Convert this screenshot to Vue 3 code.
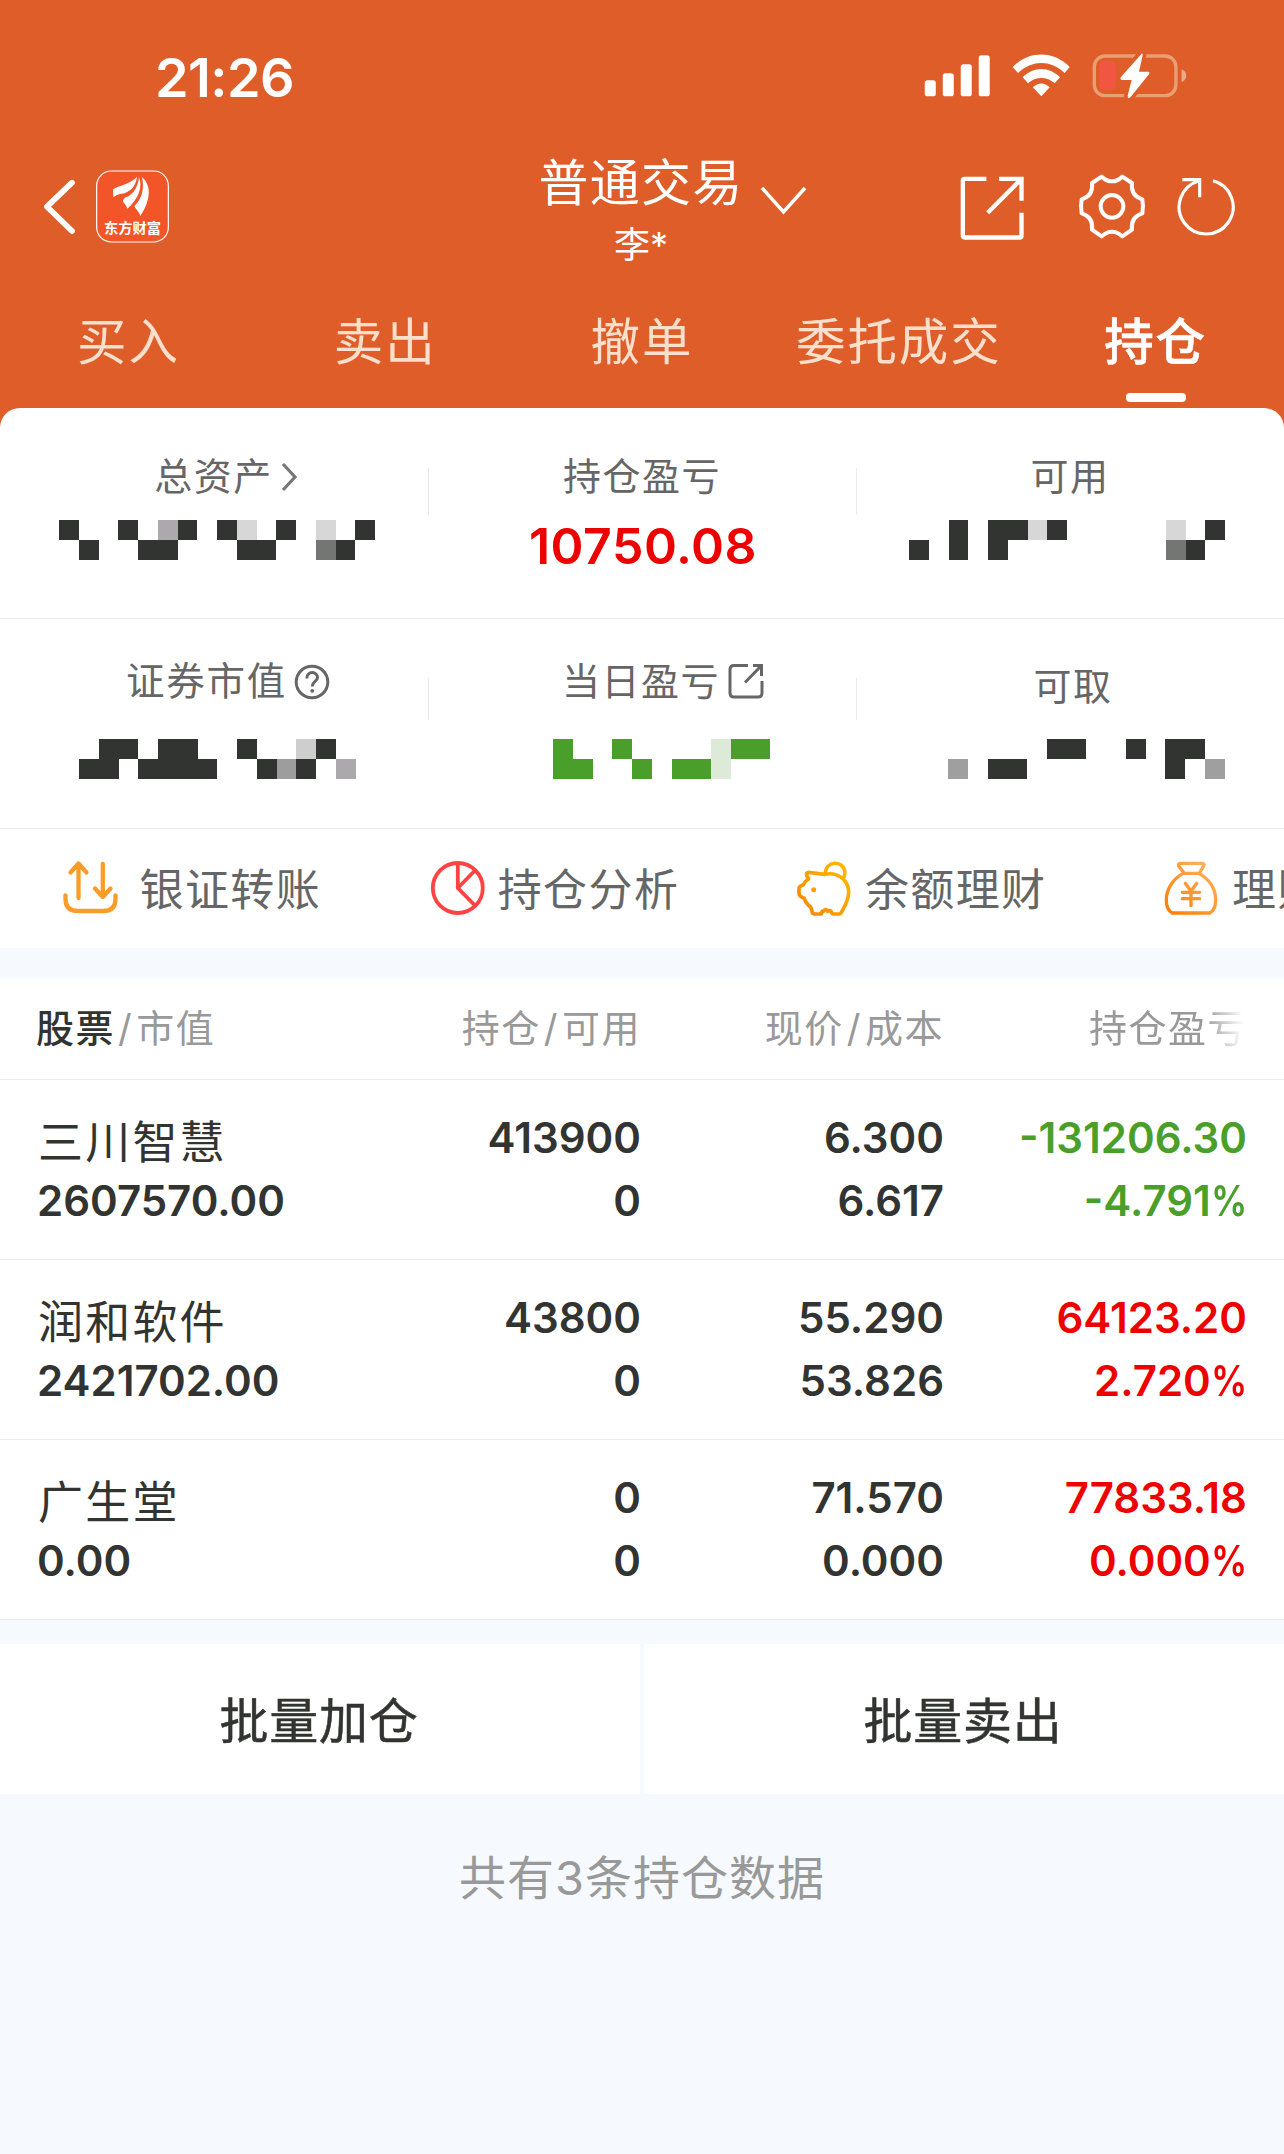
<script setup>
const tabs = ['买入', '卖出', '撤单', '委托成交', '持仓']

const D = '#323431'
const G = '#4a9f2a'
// Each mask cell is [column, row, colour, width, height]
const masks = {
  total: [[0, 0, D], [3, 0, D], [5, 0, '#aba9ac'], [6, 0, D], [8, 0, D], [9, 0, '#d7d7d7'], [11, 0, D], [13, 0, '#d7d7d7'], [15, 0, D],
    [1, 1, D], [4, 1, D, 2], [9, 1, D, 2], [13, 1, '#747673'], [14, 1, D]],
  usable: [[2, 0, D, 1, 2], [4, 0, D, 2], [4, 1, D], [6, 0, '#d7d7d7'], [7, 0, D], [13, 0, '#d7d7d7'], [15, 0, D],
    [0, 1, D], [13, 1, '#747673'], [14, 1, D]],
  market: [[1, 0, D, 2], [4, 0, D, 2], [8, 0, D], [11, 0, '#cecece'], [12, 0, D],
    [0, 1, D, 2], [3, 1, D, 4], [9, 1, D], [10, 1, '#9c9d9c'], [11, 1, D], [13, 1, '#aba9ac']],
  today: [[0, 0, G, 1, 2], [1, 1, G], [3, 0, G], [4, 1, G], [6, 1, G, 2], [8, 0, '#ddead7', 1, 2], [9, 0, G, 2]],
  cash: [[5, 0, D, 2], [9, 0, D], [11, 0, D, 2], [11, 1, D], [0, 1, '#9f9f9f'], [2, 1, D, 2], [13, 1, '#9f9f9f']],
}
const rects = (name) => masks[name].map(([c, r, fill, w = 1, h = 1]) => {
  const x = Math.round(c * 19.75)
  return { x, y: r * 20, width: Math.round((c + w) * 19.75) - x, height: h * 20, fill }
})

const rows = [
  { name: '三川智慧', value: '2607570.00', hold: '413900', avail: '0', price: '6.300', cost: '6.617', pl: '-131206.30', pct: '-4.791', tone: 'down' },
  { name: '润和软件', value: '2421702.00', hold: '43800', avail: '0', price: '55.290', cost: '53.826', pl: '64123.20', pct: '2.720', tone: 'up' },
  { name: '广生堂', value: '0.00', hold: '0', avail: '0', price: '71.570', cost: '0.000', pl: '77833.18', pct: '0.000', tone: 'up' },
]
</script>

<template>
  <div class="page">
    <header class="top">
      <div class="status">
        <span class="time">21:26</span>
        <svg class="status-icons" viewBox="-20 35 800 145">
          <g fill="#fff">
            <rect x="-15" y="120" width="33" height="48" rx="8" />
            <rect x="39" y="99" width="33" height="69" rx="8" />
            <rect x="93" y="72" width="33" height="96" rx="8" />
            <rect x="147" y="45" width="33" height="123" rx="8" />
            <path d="M249 80C298 30 372 30 420 80L405 98C363 58 307 58 265 98Z" />
            <path d="M279 111C312 78 358 78 391 111L375 129C352 108 318 108 295 129Z" />
            <path d="M309 141Q335 118 360 141L335 168Z" />
          </g>
          <rect x="494" y="47" width="245" height="119" rx="32" fill="none" stroke="#e99f73" stroke-width="10" />
          <path d="M756 87Q770 93 770 106T756 126Z" fill="#ecaa86" />
          <rect x="509" y="62" width="50" height="88" rx="15" fill="#f05642" />
          <path d="M636 40Q640 38 639 46L628 94H657Q662 96 658 102L603 170Q595 177 594 167L606 119H577Q570 117 574 110Z" fill="#fff" stroke="#df5d29" stroke-width="22" />
          <path d="M636 40Q640 38 639 46L628 94H657Q662 96 658 102L603 170Q595 177 594 167L606 119H577Q570 117 574 110Z" fill="#fff" />
        </svg>
      </div>

      <div class="bar">
        <div class="bar-left">
          <svg class="back" viewBox="35 50 105 180"><path d="M125 67L50 139L125 212" fill="none" stroke="#fff" stroke-width="17" stroke-linecap="round" stroke-linejoin="round" /></svg>
          <svg class="logo" viewBox="195 25 225 225">
            <rect x="200" y="31" width="215" height="213" rx="44" fill="#f15528" stroke="#fff" stroke-width="3.5" />
            <g fill="#fff">
              <path d="M249 86C262 75 300 72 321 48C318 78 298 96 275 99C264 100 256 105 250 110Z" />
              <path d="M279 120Q280 112 290 109C312 100 325 75 327 49C338 78 328 112 292 144C290 133 282 130 279 120Z" />
              <path d="M313 137C338 112 343 82 336 50C364 72 364 118 331 166C328 154 319 148 313 137Z" />
            </g>
            <text x="222" y="217" font-size="42" font-weight="700" fill="#fff" textLength="171" lengthAdjust="spacingAndGlyphs">东方财富</text>
          </svg>
        </div>
        <div class="title">
          <div class="title-text">普通交易</div>
          <div class="user">李*</div>
        </div>
        <svg class="caret" viewBox="0 0 48 34"><path d="M3 3L24.500 27L46 3" fill="none" stroke="#fff" stroke-width="3.500" /></svg>
        <div class="tools">
          <svg width="66.700" height="66.700" viewBox="85 400 200 200">
            <path d="M167 417.500H102Q96.500 417.500 96.500 423V587Q96.500 593.500 102 593.500H267Q272.500 593.500 272.500 588V519M205 417.500H272.500V483M171 519L268 422" fill="none" stroke="#fff" stroke-width="13" />
          </svg>
          <svg width="70" height="66.700" viewBox="440 400 210 200">
            <g fill="none" stroke="#fff" stroke-width="12" stroke-linejoin="round">
              <path d="M514 411Q529 425 545 425Q561 425 576 411L605 430C602 455 612 472 636 479Q640 500 636 521C612 528 602 545 605 570L576 590Q561 576 545 576Q529 576 514 590L485 570C488 545 478 528 454 521Q450 500 454 479C478 472 488 455 485 430Z" />
              <circle cx="545" cy="500" r="34" />
            </g>
          </svg>
          <svg width="61.700" height="66.700" viewBox="735 400 185 200">
            <path d="M846 423.500A81 81 0 1 1 803 424M754 420H806V473" fill="none" stroke="#fff" stroke-width="9.500" />
          </svg>
        </div>
      </div>

      <nav class="tabs">
        <div v-for="(t, i) in tabs" :key="t" class="tab" :class="{ active: i === 4 }">{{ t }}</div>
      </nav>
    </header>

    <div class="card-wrap">
      <section class="card">
        <div class="stats">
          <div class="stat">
            <div class="label first">总资产<svg class="more" viewBox="0 0 18 30"><path d="M3 2L15 15L3 28" fill="none" stroke="#777" stroke-width="3.200" /></svg></div>
            <svg class="mask m-total" width="317" height="40"><rect v-for="(r, i) in rects('total')" :key="i" v-bind="r" /></svg>
          </div>
          <div class="stat">
            <div class="label">持仓盈亏</div>
            <div class="profit">10750.08</div>
          </div>
          <div class="stat">
            <div class="label">可用</div>
            <svg class="mask m-usable" width="317" height="40"><rect v-for="(r, i) in rects('usable')" :key="i" v-bind="r" /></svg>
          </div>
        </div>
        <div class="stats second">
          <div class="stat">
            <div class="label first market">证券市值<svg class="help" viewBox="0 0 36 36">
              <g fill="none" stroke="#666" stroke-width="3"><circle cx="18" cy="18" r="15.800" /><path d="M12.800 14.500C12.800 6.500 23.500 7 23.500 13.500C23.500 17.500 18.200 17.500 18.200 22.500" /></g>
              <circle cx="18.200" cy="26.800" r="1.900" fill="#666" />
            </svg></div>
            <svg class="mask m-market" width="317" height="40"><rect v-for="(r, i) in rects('market')" :key="i" v-bind="r" /></svg>
          </div>
          <div class="stat">
            <div class="label"><span class="anchor">当日盈亏<svg class="open" viewBox="0 0 36 36"><path d="M20 2.500H6Q2 2.500 2 6.500V30Q2 34 6 34H30Q34 34 34 30V18M25 2.500H33.500V13M33 3L17 19.500" fill="none" stroke="#666" stroke-width="3" /></svg></span></div>
            <svg class="mask m-today" width="220" height="40"><rect v-for="(r, i) in rects('today')" :key="i" v-bind="r" /></svg>
          </div>
          <div class="stat">
            <div class="label low">可取</div>
            <svg class="mask m-cash" width="317" height="40"><rect v-for="(r, i) in rects('cash')" :key="i" v-bind="r" /></svg>
          </div>
        </div>

        <div class="actions">
          <div class="action wide">
            <svg viewBox="62.500 860 57 57"><path d="M79 898V864M71 872.500L79 863.500L87 872.500M103.300 864V897M95.500 888.500L103.300 897L111 888.500M66 895.500V899Q66 911 78 911H104Q116 911 116 899V895.500" fill="none" stroke="#fa9c2a" stroke-width="4.300" stroke-linecap="round" stroke-linejoin="round" /></svg>
            <span>银证转账</span>
          </div>
          <div class="action">
            <svg viewBox="429.500 860 57 57"><g fill="none" stroke="#ff4242" stroke-width="3.800"><circle cx="458.300" cy="888" r="25" /><path d="M458.300 863V888L476.500 906.500M458.300 888L476 870" /></g></svg>
            <span>持仓分析</span>
          </div>
          <div class="action">
            <svg viewBox="20 28 171 171">
              <defs><linearGradient id="pig" x1="1" y1="0" x2="0" y2="1"><stop offset="0" stop-color="#ffbc00" /><stop offset="1" stop-color="#f78500" /></linearGradient></defs>
              <path d="M52 68Q55 64 65 66L105 71C150 62 178 92 178 125C178 150 166 168 156 185Q154 190 148 190H132Q128 190 125 182Q121 178 115 182Q108 172 102 182Q98 178 96 190H76Q69 190 68 182Q66 168 58 164Q48 155 44 142Q30 138 29 128V112Q30 106 42 102Q46 92 58 84Q50 76 52 68ZM108 68C110 29 160 29 166 60Q168 72 163 82" fill="none" stroke="url(#pig)" stroke-width="11" stroke-linejoin="round" />
              <circle cx="73" cy="117" r="7.500" fill="#fda000" />
            </svg>
            <span>余额理财</span>
          </div>
          <div class="action">
            <svg viewBox="1120 28 171 171">
              <defs><linearGradient id="bag" x1="1" y1="0" x2="0" y2="1"><stop offset="0" stop-color="#ffb768" /><stop offset="1" stop-color="#ff7c00" /></linearGradient></defs>
              <path d="M1172 38H1238Q1246 39 1242 46L1232 62Q1230 68 1226 68H1184L1167 46Q1165 39 1172 38ZM1180 68C1145 88 1130 120 1130 148Q1130 178 1148 187H1260Q1278 178 1278 148C1278 115 1262 88 1228 68M1187 98L1204 122L1221 98M1204 122V165M1178 125H1230M1178 144H1230" fill="none" stroke="url(#bag)" stroke-width="10" stroke-linecap="round" stroke-linejoin="round" />
            </svg>
            <span>理财</span>
          </div>
        </div>
      </section>
    </div>

    <section class="table">
      <div class="row head">
        <div class="left"><b>股票</b><i>/</i>市值</div>
        <div>持仓<i>/</i>可用</div>
        <div>现价<i>/</i>成本</div>
        <div class="fade">持仓盈亏</div>
      </div>
      <div v-for="r in rows" :key="r.name" class="row item">
        <div class="left"><p class="name">{{ r.name }}</p><p>{{ r.value }}</p></div>
        <div><p>{{ r.hold }}</p><p>{{ r.avail }}</p></div>
        <div><p>{{ r.price }}</p><p>{{ r.cost }}</p></div>
        <div :class="r.tone"><p>{{ r.pl }}</p><p>{{ r.pct }}<span class="unit">%</span></p></div>
      </div>
    </section>

    <div class="batch">
      <button>批量加仓</button>
      <button>批量卖出</button>
    </div>
    <p class="summary">共有3条持仓数据</p>
  </div>
</template>

<style>
body { background: #f6faff; }
</style>

<style scoped>
.page {
  width: 1284px;
  height: 2154px;
  overflow: hidden;
  background: #f6faff;
  color: #323431;
  font-family: Inter, "Noto Sans CJK SC", sans-serif;
}
.page svg { display: block; flex: none; }
p { margin: 0; }
.top { height: 408px; background: #df5d29; color: #fff; }
.status { display: flex; justify-content: space-between; height: 155px; padding: 0 94px 0 155px; }
.time { margin-top: 48px; height: 60px; line-height: 60px; font-size: 54px; font-weight: 570; letter-spacing: -0.600px; }
.status-icons { width: 266.7px; height: 48.3px; margin-top: 51.7px; }
.bar { display: flex; height: 125px; }
.bar-left { display: flex; width: 538px; }
.back { width: 35px; height: 60px; margin: 21.700px 0 0 41.700px; }
.logo { width: 75px; height: 75px; margin: 13.700px 0 0 18.300px; }
.title { width: 206px; text-align: center; white-space: nowrap; }
.title-text { margin-top: 1px; height: 54px; line-height: 54px; font-size: 50px; letter-spacing: 1.200px; }
.user { height: 70px; line-height: 70px; font-size: 36px; }
.caret { width: 48px; height: 34px; margin: 30px 0 0 15px; }
.tools { display: flex; margin: 18.300px 46.500px 0 auto; }
.tools svg:nth-child(2) { margin: 0 28.500px 0 51.800px; }
.tabs { display: flex; height: 128px; }
.tab { width: 256.800px; height: 124px; line-height: 124px; text-align: center; font-size: 49.500px; letter-spacing: 1.900px; color: #fadfcd; white-space: nowrap; }
.tab.active { position: relative; color: #fff; font-weight: 500; -webkit-text-stroke: 0.600px #fff; }
.tab.active::after { content: ""; position: absolute; left: 99px; top: 113px; width: 60px; height: 9px; border-radius: 4px; background: #fff; }
.card-wrap { background: #df5d29; }
.card { height: 540px; overflow: hidden; border-radius: 20px 20px 0 0; background: #fff; }
.stats { display: grid; grid-template-columns: repeat(3, 428px); height: 211px; border-bottom: 1px solid #eaeaea; box-sizing: border-box; background: linear-gradient(#ebebeb, #ebebeb) 428px 60px / 1px 47px no-repeat, linear-gradient(#ebebeb, #ebebeb) 856px 60px / 1px 47px no-repeat; }
.stats.second { height: 210px; background-position: 428px 59px, 856px 59px; background-size: 1px 42px; }
.label { display: flex; justify-content: center; align-items: center; height: 60px; line-height: 60px; margin-top: 38px; font-size: 38px; letter-spacing: 1.500px; color: #666; white-space: nowrap; }
.label.first { padding-left: 24px; }
.label.market { font-size: 38.500px; letter-spacing: 1.800px; padding-left: 28px; }
.second .label { margin-top: 32px; }
.second .label.low { margin-top: 37px; margin-bottom: -5px; padding-left: 6px; }
.anchor { position: relative; left: -1px; }
.more { width: 18px; height: 30px; margin: 1px 0 0 7px; }
.help { width: 36px; height: 36px; margin: 1px 0 0 7px; }
.open { position: absolute; left: 166px; top: 12px; width: 36px; height: 36px; }
.profit { height: 60px; margin-top: 10px; padding-left: 2px; line-height: 60px; text-align: center; font-size: 50px; font-weight: 580; letter-spacing: 0.500px; color: #ee0000; }
.mask { margin-top: 14px; shape-rendering: crispEdges; }
.second .mask { margin-top: 28px; }
.m-total { margin-left: 59px; }
.m-usable { margin-left: 53px; }
.m-market { margin-left: 79px; }
.m-today { margin-left: 125px; }
.m-cash { margin-left: 92px; }
.actions { display: flex; height: 119px; padding-left: 61.500px; overflow: hidden; }
.action { display: flex; flex: none; align-items: center; width: 367.200px; font-size: 44px; letter-spacing: 1.400px; line-height: 60px; color: #666; white-space: nowrap; }
.action svg { width: 57px; height: 57px; margin-right: 12px; }
.action.wide svg { margin-right: 21px; }
.action span { padding-top: 2px; }
.table { margin-top: 30px; background: #fff; }
.row { display: grid; grid-template-columns: 301px 303px 303px 303px; padding-left: 37px; border-bottom: 1px solid #eaeaea; box-sizing: border-box; text-align: right; white-space: nowrap; }
.row .left { text-align: left; }
.head { height: 102px; line-height: 101px; font-size: 38px; letter-spacing: 1.500px; color: #999; }
.head .left { margin-left: -1px; }
.head b { font-weight: 500; color: #323431; }
.head i { margin: 0 3px; font-style: normal; }
.fade { -webkit-mask-image: linear-gradient(90deg, #000 86%, transparent 99%); mask-image: linear-gradient(90deg, #000 86%, transparent 99%); }
.item { height: 180px; padding-top: 26px; font-size: 42px; font-weight: 570; line-height: 63px; }
.item .name { padding: 8px 0 0 1px; height: 55px; line-height: 57px; font-size: 45px; font-weight: 400; letter-spacing: 2.200px; }
.unit { display: inline-block; margin-left: -6px; transform: scaleX(0.86); transform-origin: right; }
.up { color: #ee0000; }
.down { color: #4a9f2a; }
.batch { display: grid; grid-template-columns: 1fr 1fr; gap: 4px; height: 150px; margin-top: 24px; }
.batch button { border: 0; padding: 0 2px 3px 0; background: #fff; font: 400 49px Inter, "Noto Sans CJK SC", sans-serif; letter-spacing: 0.800px; color: #323431; -webkit-text-stroke: 0.500px #323431; }
.summary { margin-top: 54px; height: 60px; line-height: 60px; text-align: center; font-size: 47px; letter-spacing: 1px; color: #999; }
</style>
